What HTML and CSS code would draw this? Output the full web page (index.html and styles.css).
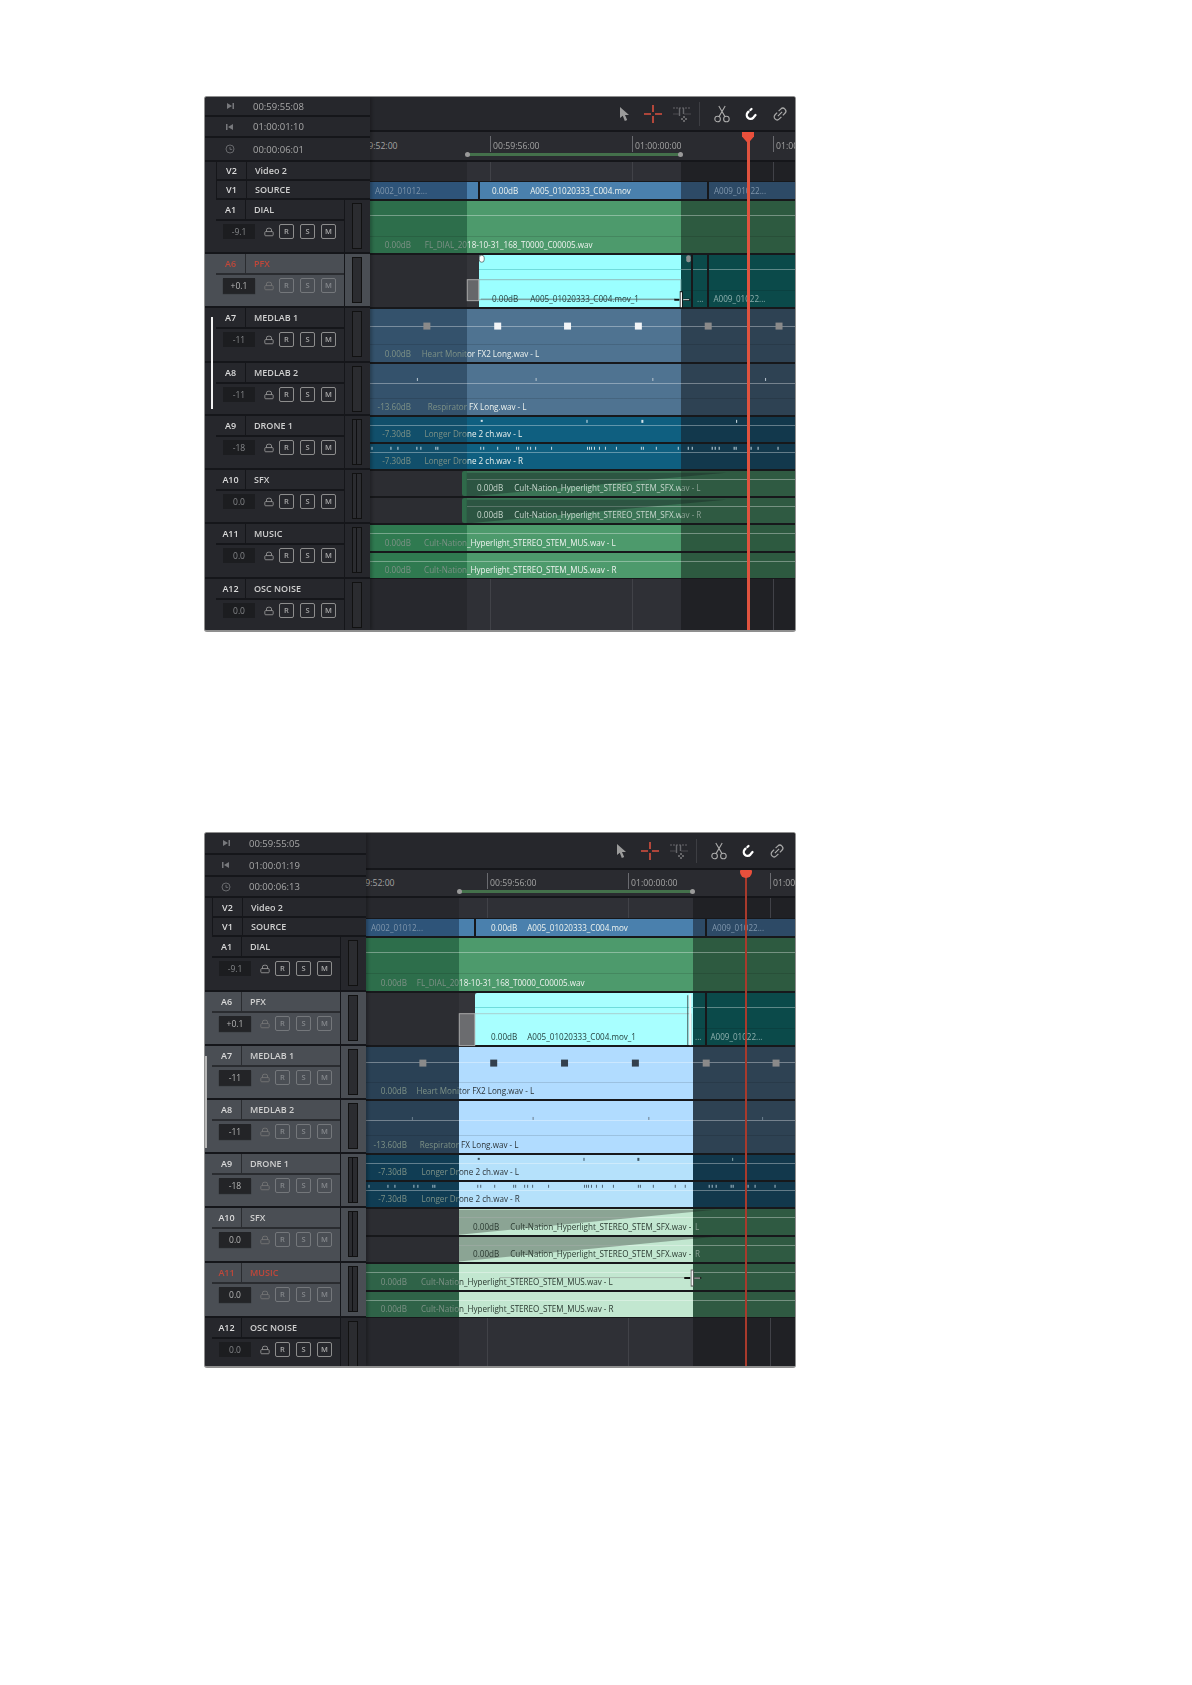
FILE: index.html
```html
<!DOCTYPE html>
<html lang="en">
<head>
    <meta charset="UTF-8">
    <title>Timeline track selection</title>
    <link rel="stylesheet" href="styles.css">
</head>
<body>
    <svg class="defs" width="0" height="0">
        <symbol id="i-out" viewBox="0 0 10 10"><path d="M2 2l5 3-5 3z M7.5 2H9v6H7.5z"/></symbol>
        <symbol id="i-in" viewBox="0 0 10 10"><path d="M8 2L3 5l5 3z M1 2h1.5v6H1z"/></symbol>
        <symbol id="i-clock" viewBox="0 0 10 10"><circle cx="5" cy="5" r="4" fill="none" stroke="currentColor" stroke-width=".8"/><path d="M5 3v2.4h2.2" fill="none" stroke="currentColor" stroke-width=".8"/></symbol>
        <symbol id="i-lock" viewBox="0 0 12 11"><rect x="1" y="5" width="10" height="5" rx="1" fill="none" stroke="currentColor"/><path d="M3 5V3a2 2 0 0 1 2-2h2a2 2 0 0 1 2 2v2" fill="none" stroke="currentColor"/></symbol>
        <symbol id="i-arrow" viewBox="0 0 18 18"><path d="M5 2l9 8h-4l2.2 5-2.4 1-2-5.2L5 13z" fill="#9b9b9b"/></symbol>
        <symbol id="i-cross" viewBox="0 0 18 18"><path d="M9 0v7M9 11v7M0 9h7M11 9h7" fill="none" stroke="#d9503f" stroke-width="1.6"/></symbol>
        <symbol id="i-trim" viewBox="0 0 18 18"><path d="M0 3h18" fill="none" stroke="#66676b" stroke-dasharray="2 1"/><path d="M6.5 3v8M10.5 3v6" fill="none" stroke="#66676b" stroke-width="1.4"/><path d="M0 9h6M11 9h7" fill="none" stroke="#4c4d51"/><path d="M11 11v2M11 15v2M8 14h2M12 14h2" fill="none" stroke="#a5a5a5"/></symbol>
        <symbol id="i-scissors" viewBox="0 0 18 18"><g fill="none" stroke="#a9a9a9" stroke-width="1.1"><circle cx="4.6" cy="14" r="2.8"/><circle cx="13.4" cy="14" r="2.8"/><path d="M6 11.6L12.2 1M12 11.6L5.8 1"/></g></symbol>
        <symbol id="i-magnet" viewBox="0 0 18 18"><path d="M9.5 4L5.8 7.4a3.8 3.8 0 0 0 5.6 5.2L14 9.5" fill="none" stroke="#fff" stroke-width="2.3" stroke-linecap="round" stroke-dasharray="1.5 2.5 16 2.5 1.5"/></symbol>
        <symbol id="i-link" viewBox="0 0 18 18"><g transform="rotate(-45 9 9)" fill="none" stroke="#a9a9a9" stroke-width="1.2"><path d="M8 6H5a3 3 0 0 0 0 6h3M10 6h3a3 3 0 0 1 0 6h-3M6 9h6"/></g></symbol>
    </svg>

    <!-- first panel: PFX clip being trimmed -->
    <section class="panel p1">
        <div class="side">
            <div class="tc"><svg class="tc-icon"><use href="#i-out"/></svg><span>00:59:55:08</span></div>
            <div class="tc"><svg class="tc-icon"><use href="#i-in"/></svg><span>01:00:01:10</span></div>
            <div class="tc"><svg class="tc-icon"><use href="#i-clock"/></svg><span>00:00:06:01</span></div>
            <div class="vrow"><span class="t-id">V2</span><span class="t-name">Video 2</span></div>
            <div class="vrow"><span class="t-id">V1</span><span class="t-name">SOURCE</span></div>

            <div class="track"><div class="t-main"><div class="t-head"><span class="t-id">A1</span><span class="t-name">DIAL</span></div><div class="t-ctl"><span class="vol">-9.1</span><svg class="lock"><use href="#i-lock"/></svg><b class="btn">R</b><b class="btn">S</b><b class="btn">M</b></div></div><div class="meter-col"><div class="meter"></div></div></div>
            <div class="track sel armed"><div class="t-main"><div class="t-head"><span class="t-id">A6</span><span class="t-name">PFX</span></div><div class="t-ctl"><span class="vol">+0.1</span><svg class="lock"><use href="#i-lock"/></svg><b class="btn">R</b><b class="btn">S</b><b class="btn">M</b></div></div><div class="meter-col"><div class="meter"></div></div></div>
            <div class="track"><div class="t-main"><div class="t-head"><span class="t-id">A7</span><span class="t-name">MEDLAB 1</span></div><div class="t-ctl"><span class="vol">-11</span><svg class="lock"><use href="#i-lock"/></svg><b class="btn">R</b><b class="btn">S</b><b class="btn">M</b></div></div><div class="meter-col"><div class="meter"></div></div></div>
            <div class="track"><div class="t-main"><div class="t-head"><span class="t-id">A8</span><span class="t-name">MEDLAB 2</span></div><div class="t-ctl"><span class="vol">-11</span><svg class="lock"><use href="#i-lock"/></svg><b class="btn">R</b><b class="btn">S</b><b class="btn">M</b></div></div><div class="meter-col"><div class="meter"></div></div></div>
            <div class="track"><div class="t-main"><div class="t-head"><span class="t-id">A9</span><span class="t-name">DRONE 1</span></div><div class="t-ctl"><span class="vol">-18</span><svg class="lock"><use href="#i-lock"/></svg><b class="btn">R</b><b class="btn">S</b><b class="btn">M</b></div></div><div class="meter-col"><div class="meter stereo"></div></div></div>
            <div class="track"><div class="t-main"><div class="t-head"><span class="t-id">A10</span><span class="t-name">SFX</span></div><div class="t-ctl"><span class="vol">0.0</span><svg class="lock"><use href="#i-lock"/></svg><b class="btn">R</b><b class="btn">S</b><b class="btn">M</b></div></div><div class="meter-col"><div class="meter stereo"></div></div></div>
            <div class="track"><div class="t-main"><div class="t-head"><span class="t-id">A11</span><span class="t-name">MUSIC</span></div><div class="t-ctl"><span class="vol">0.0</span><svg class="lock"><use href="#i-lock"/></svg><b class="btn">R</b><b class="btn">S</b><b class="btn">M</b></div></div><div class="meter-col"><div class="meter stereo"></div></div></div>
            <div class="track last"><div class="t-main"><div class="t-head"><span class="t-id">A12</span><span class="t-name">OSC NOISE</span></div><div class="t-ctl"><span class="vol">0.0</span><svg class="lock"><use href="#i-lock"/></svg><b class="btn">R</b><b class="btn">S</b><b class="btn">M</b></div></div><div class="meter-col"><div class="meter"></div></div></div>
            <span class="scroll"></span>
        </div>

        <div class="timeline">
            <div class="toolbar">
                <svg class="tool"><use href="#i-arrow"/></svg>
                <svg class="tool"><use href="#i-cross"/></svg>
                <svg class="tool"><use href="#i-trim"/></svg>
                <span class="divider"></span>
                <svg class="tool"><use href="#i-scissors"/></svg>
                <svg class="tool"><use href="#i-magnet"/></svg>
                <svg class="tool"><use href="#i-link"/></svg>
            </div>
            <div class="ruler">
                <span class="rl t0">00:59:52:00</span>
                <span class="rl t1">00:59:56:00</span>
                <span class="rl t2">01:00:00:00</span>
                <span class="rl t3">01:00:04:00</span>
                <span class="range-bar"></span>
            </div>

            <div class="lane blank"><div class="clip"><div class="seg before"></div><div class="seg range"></div><div class="seg after"></div></div><i class="tick t1"></i><i class="tick t2"></i><i class="tick t3"></i></div>

            <div class="lane plain">
                <div class="clip">
                    <div class="seg before c-navy-lo"><span class="txt first">A002_01012...</span></div>
                    <div class="seg range c-navy-hi"><span class="v1-lbl"><span>0.00dB</span><span>A005_01020333_C004.mov</span></span></div>
                    <div class="seg after c-navy-off"><span class="txt a009">A009_01022...</span></div>
                </div>
                <i class="cut cut-a"></i><i class="cut cut-b"></i>
            </div>

            <div class="lane mono">
                <div class="clip">
                    <div class="seg before c-green-lo"><span class="db">0.00dB</span><span class="txt">FL_DIAL_20</span></div>
                    <div class="seg range c-green-hi"><span class="txt">18-10-31_168_T0000_C00005.wav</span></div>
                    <div class="seg after c-green-off"></div>
                </div>
            </div>

            <div class="lane mono">
                <div class="clip">
                    <div class="seg before c-none"></div>
                    <div class="seg range c-none"><div class="cyan-clip"><span class="v1-lbl"><span>0.00dB</span><span>A005_01020333_C004.mov_1</span></span></div></div>
                    <div class="seg after c-teal"><span class="txt dots">...</span><span class="txt a009 near">A009_01022...</span></div>
                </div>
                <i class="cut cut-c"></i><i class="cut cut-b"></i>
            </div>

            <div class="lane mono l17">
                <div class="clip">
                    <div class="seg before c-steel-lo"><span class="db">0.00dB</span><span class="txt">Heart Monit</span></div>
                    <div class="seg range c-steel-hi"><span class="txt">or FX2 Long.wav - L</span></div>
                    <div class="seg after c-steel-off"></div>
                </div>
            </div>

            <div class="lane mono l19">
                <div class="clip">
                    <div class="seg before c-steel-lo"><span class="db">-13.60dB</span><span class="txt">Respirator</span></div>
                    <div class="seg range c-steel-hi"><span class="txt">&nbsp;FX Long.wav - L</span></div>
                    <div class="seg after c-steel-off"></div>
                </div>
            </div>

            <div class="lane half">
                <div class="clip">
                    <div class="seg before c-ocean-lo"><span class="db">-7.30dB</span><span class="txt">Longer Dro</span></div>
                    <div class="seg range c-ocean-hi"><span class="txt">ne 2 ch.wav - L</span></div>
                    <div class="seg after c-ocean-off"></div>
                </div>
                <div class="clip">
                    <div class="seg before c-ocean-lo"><span class="db">-7.30dB</span><span class="txt">Longer Dro</span></div>
                    <div class="seg range c-ocean-hi"><span class="txt">ne 2 ch.wav - R</span></div>
                    <div class="seg after c-ocean-off"></div>
                </div>
            </div>

            <div class="lane half">
                <div class="clip">
                    <div class="seg before c-none"><span class="stub"></span></div>
                    <div class="seg range c-fade-hi"><span class="sfx-lbl"><span>0.00dB</span><span>Cult-Nation_Hyperlight_STEREO_STEM_SFX.w</span></span></div>
                    <div class="seg after c-fade-off"><span class="txt dim">av - L</span></div>
                </div>
                <div class="clip">
                    <div class="seg before c-none"><span class="stub"></span></div>
                    <div class="seg range c-fade-hi"><span class="sfx-lbl"><span>0.00dB</span><span>Cult-Nation_Hyperlight_STEREO_STEM_SFX.w</span></span></div>
                    <div class="seg after c-fade-off"><span class="txt dim">av - R</span></div>
                </div>
            </div>

            <div class="lane half">
                <div class="clip">
                    <div class="seg before c-green-mid"><span class="db">0.00dB</span><span class="txt">Cult-Nation</span></div>
                    <div class="seg range c-green-hi"><span class="txt">_Hyperlight_STEREO_STEM_MUS.wav - L</span></div>
                    <div class="seg after c-green-off"></div>
                </div>
                <div class="clip">
                    <div class="seg before c-green-mid"><span class="db">0.00dB</span><span class="txt">Cult-Nation</span></div>
                    <div class="seg range c-green-hi"><span class="txt">_Hyperlight_STEREO_STEM_MUS.wav - R</span></div>
                    <div class="seg after c-green-off"></div>
                </div>
            </div>

            <div class="lane blank"><div class="clip"><div class="seg before"></div><div class="seg range"></div><div class="seg after"></div></div><i class="tick t1"></i><i class="tick t2"></i><i class="tick t3"></i></div>

            <svg class="overlay" viewBox="370 97 426 533">
                <path d="M467 497L727 473H467zM467 524L727 500H467z" fill="#12181a" fill-opacity=".33"/>
                <g fill="#8a8a8a"><rect x="423.5" y="322.5" width="7" height="7"/><rect x="705.5" y="322.5" width="7" height="7"/><rect x="776.5" y="322.5" width="7" height="7"/></g>
                <g fill="#f2f5f7"><rect x="494.5" y="322.5" width="7" height="7"/><rect x="564.5" y="322.5" width="7" height="7"/><rect x="635.5" y="322.5" width="7" height="7"/></g>
                <g fill="#b9c6d0"><rect x="417" y="378" width="1" height="3"/><rect x="536" y="378" width="1" height="3"/><rect x="653" y="378" width="1" height="3"/><rect x="766" y="378" width="1" height="3"/></g>
                <g fill="#d6e4ea"><rect x="481" y="420" width="2" height="2"/><rect x="587" y="420" width="1" height="3"/><rect x="642" y="420" width="2" height="3"/><rect x="737" y="420" width="1" height="3"/></g>
                <path d="M372 447v3M391 447v3M398 447v3M417 447v3M421 447v3M436 447v3M438 447v3M481 447v3M484 447v3M498 447v3M517 447v3M519 447v3M528 447v3M531 447v3M536 447v3M552 447v3M588 447v3M590 447v3M592 447v3M595 447v3M600 447v3M606 447v3M617 447v3M642 447v3M644 447v3M657 447v3M679 447v3M689 447v3M693 447v3M713 447v3M716 447v3M720 447v3M735 447v3M737 447v3M752 447v3M759 447v3M779 447v3" stroke="#c9dbe3" stroke-width="1"/>
                <rect x="479" y="279.5" width="202.5" height="20" fill="none" stroke="#8fbcbc"/>
                <rect x="467.5" y="279.5" width="11.5" height="21" fill="#66676a" stroke="#a9a9a9"/>
                <path d="M481 299H676" stroke="#6f8f8f"/>
                <rect x="479.5" y="255" width="5" height="7" rx="2.5" fill="#fff" stroke="#333" stroke-width=".6"/>
                <rect x="687" y="255" width="4.5" height="7" rx="2" fill="#8a8f8f"/>
                <path d="M675 299.5h5M685 299.5h6" stroke="#111" stroke-width="2"/><path d="M684 299.5h6" stroke="#ddd"/>
                <path d="M682 291v17" stroke="#111" stroke-width="3"/><path d="M682 292v15" stroke="#fff" stroke-width="1.4"/>
            </svg>
            <div class="playhead"><span class="head"></span></div>
        </div>
    </section>

    <!-- second panel: several tracks selected, music clip trimmed -->
    <section class="panel p2">
        <div class="side">
            <div class="tc"><svg class="tc-icon"><use href="#i-out"/></svg><span>00:59:55:05</span></div>
            <div class="tc"><svg class="tc-icon"><use href="#i-in"/></svg><span>01:00:01:19</span></div>
            <div class="tc"><svg class="tc-icon"><use href="#i-clock"/></svg><span>00:00:06:13</span></div>
            <div class="vrow"><span class="t-id">V2</span><span class="t-name">Video 2</span></div>
            <div class="vrow"><span class="t-id">V1</span><span class="t-name">SOURCE</span></div>

            <div class="track"><div class="t-main"><div class="t-head"><span class="t-id">A1</span><span class="t-name">DIAL</span></div><div class="t-ctl"><span class="vol">-9.1</span><svg class="lock"><use href="#i-lock"/></svg><b class="btn">R</b><b class="btn">S</b><b class="btn">M</b></div></div><div class="meter-col"><div class="meter"></div></div></div>
            <div class="track sel"><div class="t-main"><div class="t-head"><span class="t-id">A6</span><span class="t-name">PFX</span></div><div class="t-ctl"><span class="vol">+0.1</span><svg class="lock"><use href="#i-lock"/></svg><b class="btn">R</b><b class="btn">S</b><b class="btn">M</b></div></div><div class="meter-col"><div class="meter"></div></div></div>
            <div class="track sel"><div class="t-main"><div class="t-head"><span class="t-id">A7</span><span class="t-name">MEDLAB 1</span></div><div class="t-ctl"><span class="vol">-11</span><svg class="lock"><use href="#i-lock"/></svg><b class="btn">R</b><b class="btn">S</b><b class="btn">M</b></div></div><div class="meter-col"><div class="meter"></div></div></div>
            <div class="track sel"><div class="t-main"><div class="t-head"><span class="t-id">A8</span><span class="t-name">MEDLAB 2</span></div><div class="t-ctl"><span class="vol">-11</span><svg class="lock"><use href="#i-lock"/></svg><b class="btn">R</b><b class="btn">S</b><b class="btn">M</b></div></div><div class="meter-col"><div class="meter"></div></div></div>
            <div class="track sel"><div class="t-main"><div class="t-head"><span class="t-id">A9</span><span class="t-name">DRONE 1</span></div><div class="t-ctl"><span class="vol">-18</span><svg class="lock"><use href="#i-lock"/></svg><b class="btn">R</b><b class="btn">S</b><b class="btn">M</b></div></div><div class="meter-col"><div class="meter stereo"></div></div></div>
            <div class="track sel"><div class="t-main"><div class="t-head"><span class="t-id">A10</span><span class="t-name">SFX</span></div><div class="t-ctl"><span class="vol">0.0</span><svg class="lock"><use href="#i-lock"/></svg><b class="btn">R</b><b class="btn">S</b><b class="btn">M</b></div></div><div class="meter-col"><div class="meter stereo"></div></div></div>
            <div class="track sel armed"><div class="t-main"><div class="t-head"><span class="t-id">A11</span><span class="t-name">MUSIC</span></div><div class="t-ctl"><span class="vol">0.0</span><svg class="lock"><use href="#i-lock"/></svg><b class="btn">R</b><b class="btn">S</b><b class="btn">M</b></div></div><div class="meter-col"><div class="meter stereo"></div></div></div>
            <div class="track last"><div class="t-main"><div class="t-head"><span class="t-id">A12</span><span class="t-name">OSC NOISE</span></div><div class="t-ctl"><span class="vol">0.0</span><svg class="lock"><use href="#i-lock"/></svg><b class="btn">R</b><b class="btn">S</b><b class="btn">M</b></div></div><div class="meter-col"><div class="meter"></div></div></div>
            <span class="scroll"></span>
        </div>

        <div class="timeline">
            <div class="toolbar">
                <svg class="tool"><use href="#i-arrow"/></svg>
                <svg class="tool"><use href="#i-cross"/></svg>
                <svg class="tool"><use href="#i-trim"/></svg>
                <span class="divider"></span>
                <svg class="tool"><use href="#i-scissors"/></svg>
                <svg class="tool"><use href="#i-magnet"/></svg>
                <svg class="tool"><use href="#i-link"/></svg>
            </div>
            <div class="ruler">
                <span class="rl t0">00:59:52:00</span>
                <span class="rl t1">00:59:56:00</span>
                <span class="rl t2">01:00:00:00</span>
                <span class="rl t3">01:00:04:00</span>
                <span class="range-bar"></span>
            </div>

            <div class="lane blank"><div class="clip"><div class="seg before"></div><div class="seg range"></div><div class="seg after"></div></div><i class="tick t1"></i><i class="tick t2"></i><i class="tick t3"></i></div>

            <div class="lane plain">
                <div class="clip">
                    <div class="seg before c-navy-lo"><span class="txt first">A002_01012...</span></div>
                    <div class="seg range c-navy-hi"><span class="v1-lbl"><span>0.00dB</span><span>A005_01020333_C004.mov</span></span></div>
                    <div class="seg after c-navy-off"><span class="txt a009">A009_01022...</span></div>
                </div>
                <i class="cut cut-a"></i><i class="cut cut-b"></i>
            </div>

            <div class="lane mono">
                <div class="clip">
                    <div class="seg before c-green-lo"><span class="db">0.00dB</span><span class="txt">FL_DIAL_20</span></div>
                    <div class="seg range c-green-hi"><span class="txt">18-10-31_168_T0000_C00005.wav</span></div>
                    <div class="seg after c-green-off"></div>
                </div>
            </div>

            <div class="lane mono">
                <div class="clip">
                    <div class="seg before c-none"></div>
                    <div class="seg range c-none"><div class="cyan-clip"><span class="v1-lbl"><span>0.00dB</span><span>A005_01020333_C004.mov_1</span></span></div></div>
                    <div class="seg after c-teal"><span class="txt dots">...</span><span class="txt a009 near">A009_01022...</span></div>
                </div>
                <i class="cut cut-b"></i>
            </div>

            <div class="lane mono l15">
                <div class="clip">
                    <div class="seg before c-steel-dark"><span class="db">0.00dB</span><span class="txt">Heart Moni</span></div>
                    <div class="seg range c-sky"><span class="txt">tor FX2 Long.wav - L</span></div>
                    <div class="seg after c-steel-off"></div>
                </div>
            </div>

            <div class="lane mono l19">
                <div class="clip">
                    <div class="seg before c-steel-dark"><span class="db">-13.60dB</span><span class="txt">Respirator</span></div>
                    <div class="seg range c-sky"><span class="txt">&nbsp;FX Long.wav - L</span></div>
                    <div class="seg after c-steel-off"></div>
                </div>
            </div>

            <div class="lane half">
                <div class="clip">
                    <div class="seg before c-ocean-dark"><span class="db">-7.30dB</span><span class="txt">Longer Dr</span></div>
                    <div class="seg range c-ice"><span class="txt">one 2 ch.wav - L</span></div>
                    <div class="seg after c-ocean-off"></div>
                </div>
                <div class="clip">
                    <div class="seg before c-ocean-dark"><span class="db">-7.30dB</span><span class="txt">Longer Dr</span></div>
                    <div class="seg range c-ice"><span class="txt">one 2 ch.wav - R</span></div>
                    <div class="seg after c-ocean-off"></div>
                </div>
            </div>

            <div class="lane half">
                <div class="clip">
                    <div class="seg before c-none"></div>
                    <div class="seg range c-mint"><span class="sfx-lbl"><span>0.00dB</span><span>Cult-Nation_Hyperlight_STEREO_STEM_SFX.wav -</span></span></div>
                    <div class="seg after c-fade-off"><span class="txt dim">&nbsp;L</span></div>
                </div>
                <div class="clip">
                    <div class="seg before c-none"></div>
                    <div class="seg range c-mint"><span class="sfx-lbl"><span>0.00dB</span><span>Cult-Nation_Hyperlight_STEREO_STEM_SFX.wav -</span></span></div>
                    <div class="seg after c-fade-off"><span class="txt dim">&nbsp;R</span></div>
                </div>
            </div>

            <div class="lane half">
                <div class="clip">
                    <div class="seg before c-green-dark"><span class="db">0.00dB</span><span class="txt">Cult-Natio</span></div>
                    <div class="seg range c-mint"><span class="txt">n_Hyperlight_STEREO_STEM_MUS.wav - L</span></div>
                    <div class="seg after c-fade-off"></div>
                </div>
                <div class="clip">
                    <div class="seg before c-green-dark"><span class="db">0.00dB</span><span class="txt">Cult-Natio</span></div>
                    <div class="seg range c-mint"><span class="txt">n_Hyperlight_STEREO_STEM_MUS.wav - R</span></div>
                    <div class="seg after c-fade-off"></div>
                </div>
            </div>

            <div class="lane blank"><div class="clip"><div class="seg before"></div><div class="seg range"></div><div class="seg after"></div></div><i class="tick t1"></i><i class="tick t2"></i><i class="tick t3"></i></div>

            <svg class="overlay" viewBox="366 833 430 533">
                <path d="M459 1235L716 1210H459zM459 1262L716 1237H459z" fill="#1c1c1c" fill-opacity=".33"/>
                <g fill="#8a8a8a"><rect x="419.5" y="1059.5" width="7" height="7"/><rect x="703.5" y="1059.5" width="7" height="7"/><rect x="773.5" y="1059.5" width="7" height="7"/></g>
                <g fill="#33404d"><rect x="490.5" y="1059.5" width="7" height="7"/><rect x="561.5" y="1059.5" width="7" height="7"/><rect x="632.5" y="1059.5" width="7" height="7"/></g>
                <g fill="#6c7f8e"><rect x="412" y="1117" width="1" height="3"/><rect x="533" y="1117" width="1" height="3"/><rect x="649" y="1117" width="1" height="3"/><rect x="763" y="1117" width="1" height="3"/></g>
                <g fill="#39505e"><rect x="478" y="1158" width="2" height="2"/><rect x="584" y="1158" width="1" height="3"/><rect x="638" y="1158" width="2" height="3"/></g>
                <rect x="733" y="1158" width="1" height="3" fill="#8aa"/>
                <path d="M478 1185v3M481 1185v3M495 1185v3M514 1185v3M516 1185v3M525 1185v3M528 1185v3M533 1185v3M549 1185v3M585 1185v3M587 1185v3M589 1185v3M592 1185v3M597 1185v3M603 1185v3M614 1185v3M639 1185v3M641 1185v3M654 1185v3M676 1185v3M686 1185v3" stroke="#4d6272" stroke-width="1"/>
                <path d="M369 1185v3M388 1185v3M395 1185v3M414 1185v3M418 1185v3M433 1185v3M435 1185v3M710 1185v3M713 1185v3M717 1185v3M732 1185v3M734 1185v3M749 1185v3M756 1185v3M776 1185v3" stroke="#a9c0cc" stroke-width="1"/>
                <rect x="459.5" y="1013.5" width="15.5" height="32" fill="#6b6c6f" stroke="#a9a9a9"/>
                <path d="M475 1013.5H692V1045" fill="none" stroke="#a9cfcf"/>
                <path d="M691 994v51" stroke="#f2f5f5" stroke-width="2"/>
                <path d="M688.5 995v50" stroke="#333" stroke-width=".8"/>
                <path d="M500 1278H686" stroke="#a8baae"/>
                <path d="M685 1278.5h6M695 1278.5h7" stroke="#111" stroke-width="2"/><path d="M695 1278.5h6" stroke="#ddd"/>
                <path d="M693 1270v17" stroke="#555" stroke-width="3"/><path d="M693 1271v15" stroke="#fff" stroke-width="1.4"/>
            </svg>
            <div class="playhead"><span class="head"></span></div>
        </div>
    </section>

    <footer class="page-foot"><span class="rule"></span><span class="folio"></span></footer>
</body>
</html>
```

FILE: styles.css
```css
body {
    margin: 0;
    height: 1685px;
    overflow: hidden;
    background: #fff;
    font-family: 'Open Sans', 'Liberation Sans', sans-serif;
}
.defs {
    position: absolute;
}

/* panel frame */
.panel {
    display: flex;
    width: 590px;
    margin-left: 204px;
    border: 1px solid #8f8f8f;
    border-bottom-width: 2px;
    border-radius: 3px;
    overflow: hidden;
    background: #1f2024;
    filter: blur(0.3px);
}
.p1 {
    margin-top: 96px;
    height: 533px;
    --side-w: 166px;
    --strip: 12px;
    --tc-x: 21px;
    --tc-gap: 18px;
    --before: 97px;
    --range: 214px;
    --after: 115px;
    --t1: 120px;
    --t2: 262px;
    --t3: 403px;
    --cut-a: 108px;
    --cut-b: 337px;
    --cut-c: 321px;
    --ph: 377px;
    --ph-w: 2.5px;
    --ph-col: #e0533f;
    --cyan-x: 12px;
    --lbl-x: 25px;
    --lbl-gap: 12px;
    --sfx-x: 10px;
    --tool-r: 6px;
    --a009-x: 33px;
    --dots-x: 16px;
    --near-x: 10px;
    --bar-y: 4px;
    --rl-y: 4px;
    --tracks: 19px 19px 54px 54px 55px 53px 54px 54px 55px 1fr;
    --top-side: 20px 21px 24px;
    --top-time: 35px 30px;
}
.p2 {
    margin-top: 200px;
    height: 533px;
    --side-w: 162px;
    --strip: 8px;
    --tc-x: 17px;
    --tc-gap: 18px;
    --before: 93px;
    --range: 234px;
    --after: 103px;
    --t1: 121px;
    --t2: 262px;
    --t3: 404px;
    --cut-a: 108px;
    --cut-b: 339px;
    --cut-c: 327px;
    --ph: 379px;
    --ph-w: 1.5px;
    --ph-col: #a83a2c;
    --cyan-x: 16px;
    --lbl-x: 32px;
    --lbl-gap: 10px;
    --sfx-x: 14px;
    --tool-r: 9px;
    --a009-x: 19px;
    --dots-x: 2px;
    --near-x: 9px;
    --bar-y: 3px;
    --rl-y: 3px;
    --tracks: 20px 19px 55px 54px 54px 54px 54px 55px 55px 1fr;
    --top-side: 22px 22px 21px;
    --top-time: 37px 28px;
}

/* left column */
.side {
    position: relative;
    display: grid;
    grid-template-rows: var(--top-side) var(--tracks);
    flex: none;
    width: var(--side-w);
    margin-left: -1px;
    background: #26272c;
    color: #d8d8d8;
    box-shadow: 2px 0 3px rgba(0, 0, 0, 0.25);
    z-index: 2;
}
.tc {
    display: flex;
    align-items: center;
    gap: var(--tc-gap);
    padding-left: var(--tc-x);
    border-bottom: 2px solid #15161a;
    font-size: 9.5px;
    color: #a8a8a8;
}
.tc-icon {
    width: 10px;
    height: 10px;
    fill: #77787c;
    color: #77787c;
}
.vrow {
    display: flex;
    align-items: center;
    margin-left: var(--strip);
    border-left: 1px solid #15161a;
    border-bottom: 2px solid #15161a;
    font-size: 9px;
}
.t-id {
    flex: none;
    width: 29px;
    height: 100%;
    display: flex;
    align-items: center;
    justify-content: center;
    border-right: 1px solid #15161a;
    font-weight: 600;
    color: #dcdcdc;
}
.t-name {
    padding-left: 8px;
    font-weight: 600;
    color: #cfcfcf;
}
.track {
    display: flex;
    padding-left: var(--strip);
    border-bottom: 2px solid #15161a;
    overflow: hidden;
}
.track.last {
    border-bottom: 0;
}
.track.sel {
    background: #4a4e54;
}
.t-main {
    flex: 1;
    border-right: 1px solid #15161a;
}
.t-head {
    display: flex;
    align-items: center;
    height: 19px;
    border-bottom: 2px solid #15161a;
    font-size: 9px;
}
.sel .t-head {
    border-bottom-color: #2a2c30;
}
.sel .t-id {
    border-right-color: #2a2c30;
}
.armed .t-id,
.armed .t-name {
    color: #c0473a;
}
.t-ctl {
    display: flex;
    align-items: center;
    padding: 3px 0 0 7px;
}
.vol {
    flex: none;
    width: 32px;
    height: 15px;
    margin-right: 9px;
    background: #1c1d20;
    font-size: 8.5px;
    line-height: 15px;
    text-align: center;
    color: #85878a;
}
.sel .vol {
    background: #232427;
    color: #b5b5b5;
    box-shadow: 0 1px 1px rgba(0, 0, 0, 0.5);
}
.lock {
    flex: none;
    width: 10px;
    height: 10px;
    margin-right: 5px;
    color: #9d9d9d;
}
.sel .lock {
    color: #777;
}
.btn {
    flex: none;
    width: 13px;
    height: 13px;
    margin-right: 6px;
    border: 1px solid #8d8d8d;
    border-radius: 2px;
    font-size: 7.5px;
    font-weight: 600;
    line-height: 13px;
    text-align: center;
    color: #a9a9a9;
}
.sel .btn {
    border-color: #74777b;
    color: #85888c;
}
.meter-col {
    flex: none;
    width: 25px;
    padding: 3px 0 3px 7px;
    box-sizing: border-box;
}
.meter {
    width: 10px;
    height: 46px;
    border: 1px solid #111;
    box-sizing: border-box;
    background: #2b2c30;
}
.meter.stereo {
    background: linear-gradient(90deg, #2b2c30 3px, #0f0f11 3px, #0f0f11 4px, #2b2c30 4px);
}
.scroll {
    position: absolute;
    top: 220px;
    left: 7px;
    width: 2px;
    height: 92px;
    background: #f2f2f2;
}
.p2 .scroll {
    top: 223px;
    left: 1px;
    background: #b7b7b7;
}

/* timeline */
.timeline {
    position: relative;
    flex: 1;
    display: grid;
    grid-template-rows: var(--top-time) var(--tracks);
    min-width: 0;
    background: #17181b;
}
.toolbar {
    display: flex;
    align-items: center;
    justify-content: flex-end;
    gap: 11px;
    padding-right: var(--tool-r);
    background: #26272c;
    border-bottom: 2px solid #15161a;
}
.tool {
    width: 18px;
    height: 18px;
}
.divider {
    width: 1px;
    height: 24px;
    margin: 0 2px 0 -3px;
    background: #3d3e43;
}
.ruler {
    position: relative;
    overflow: hidden;
    background: #2a2b30;
    border-bottom: 2px solid #15161a;
    font-size: 8.7px;
    color: #a3a3a3;
}
.rl {
    position: absolute;
    top: var(--rl-y);
    padding: 4px 0 0 2px;
    line-height: 12px;
    border-left: 1px solid #6a6b70;
}
.rl.t0 {
    left: calc(var(--t1) - 142px);
}
.rl.t1 {
    left: var(--t1);
}
.rl.t2 {
    left: var(--t2);
}
.rl.t3 {
    left: var(--t3);
}
.range-bar {
    position: absolute;
    bottom: var(--bar-y);
    left: var(--before);
    width: var(--range);
    height: 3px;
    background: #44704b;
}
.range-bar::before,
.range-bar::after {
    content: "";
    position: absolute;
    top: -1px;
    width: 5px;
    height: 5px;
    border-radius: 50%;
    background: #9a9a9a;
}
.range-bar::before {
    left: -2px;
}
.range-bar::after {
    right: -2px;
}

/* tracks */
.lane {
    position: relative;
    display: flex;
    flex-direction: column;
    gap: 2px;
    padding: 1px 0;
    min-height: 0;
    overflow: hidden;
}
.lane.blank {
    padding: 0;
}
.clip {
    flex: 1;
    display: flex;
    min-height: 0;
}
.seg {
    display: flex;
    align-items: flex-end;
    flex: none;
    overflow: hidden;
    white-space: nowrap;
    font-size: 8.1px;
    line-height: 11px;
    color: #eef3ef;
    background-repeat: no-repeat;
    background-size: 100% 1px;
}
.before {
    width: var(--before);
    color: #7d9186;
}
.range {
    width: var(--range);
}
.after {
    width: var(--after);
}
.blank .before {
    background-color: #27282d;
}
.blank .range {
    background-color: #2f3036;
}
.blank .after {
    background-color: #202125;
}
.mono .seg {
    background-image: linear-gradient(rgba(255, 255, 255, 0.34), rgba(255, 255, 255, 0.34)), linear-gradient(rgba(0, 0, 0, 0.12), rgba(0, 0, 0, 0.12));
    background-position: 0 14px, 0 35px;
}
.mono.l15 .seg {
    background-position: 0 15px, 0 35px;
}
.mono.l17 .seg {
    background-position: 0 17px, 0 35px;
}
.mono.l19 .seg {
    background-position: 0 19px, 0 34px;
}
.half .seg {
    background-image: linear-gradient(rgba(255, 255, 255, 0.34), rgba(255, 255, 255, 0.34));
    background-position: 0 8px;
}
.mono .c-none,
.half .c-none {
    background-image: none;
}
.plain .seg {
    align-items: center;
}
.db,
.txt,
.v1-lbl,
.sfx-lbl {
    position: relative;
    z-index: 2;
    padding-bottom: 3px;
}
.plain .txt,
.plain .v1-lbl {
    padding-bottom: 0;
}
.db {
    flex: none;
    width: 41px;
    text-align: right;
}
.before .txt {
    margin-left: auto;
}
.before .first {
    margin-left: 5px;
    color: #7f95ab;
}
.v1-lbl,
.sfx-lbl {
    display: flex;
}
.v1-lbl {
    gap: var(--lbl-gap);
    padding-left: var(--lbl-x);
}
.sfx-lbl {
    gap: 11px;
    padding-left: var(--sfx-x);
}
.dim {
    color: #8aa093;
}
.a009 {
    margin-left: var(--a009-x);
    color: #7f95ab;
}
.a009.near {
    margin-left: var(--near-x);
    color: #8fb0ae;
}
.dots {
    margin-left: var(--dots-x);
    color: #8fb0ae;
}
.cyan-clip {
    flex: 1;
    align-self: stretch;
    display: flex;
    align-items: flex-end;
    margin-left: var(--cyan-x);
    border-radius: 2px 0 0 0;
    background: #9bffff linear-gradient(#6fdcdc, #6fdcdc) 0 14px / 100% 1px no-repeat;
    color: #26413f;
}
.p2 .cyan-clip {
    background-color: #a8ffff;
}
.cyan-clip .v1-lbl {
    padding-left: calc(var(--lbl-x) - var(--cyan-x));
    padding-bottom: 3px;
}
.stub {
    width: 5px;
    height: 100%;
    margin-left: auto;
    border-radius: 2px 0 0 2px;
    background: #2f6a4a;
}
.tick {
    position: absolute;
    top: 0;
    bottom: 0;
    width: 1px;
    background: #414248;
}
.tick.t1 {
    left: var(--t1);
}
.tick.t2 {
    left: var(--t2);
}
.tick.t3 {
    left: var(--t3);
}
.cut {
    position: absolute;
    top: 0;
    bottom: 0;
    width: 2px;
    background: #17181b;
}
.cut-a {
    left: var(--cut-a);
}
.cut-b {
    left: var(--cut-b);
}
.cut-c {
    left: var(--cut-c);
}

/* clip colours */
.c-none {
    background-color: #2c2d32;
}
.range.c-none {
    background-color: #34353a;
}
.c-navy-hi {
    background-color: #4a80ad;
}
.c-navy-lo {
    background-color: #2e5479;
}
.c-navy-off {
    background-color: #2d4a66;
}
.c-green-hi {
    background-color: #4d9a6c;
}
.c-green-mid {
    background-color: #2f7a50;
}
.c-green-lo {
    background-color: #2d6e4b;
}
.c-green-dark {
    background-color: #2f6348;
}
.c-green-off {
    background-color: #2d5a40;
}
.c-teal {
    background-color: #0b4a4a;
}
.c-steel-hi {
    background-color: #4f7391;
}
.c-steel-lo {
    background-color: #34526c;
}
.c-steel-dark {
    background-color: #2a4155;
}
.c-steel-off {
    background-color: #2e4253;
}
.c-sky {
    background-color: #b1dcff;
    color: #2b3338;
}
.c-ocean-hi {
    background-color: #0f5f80;
}
.c-ocean-lo {
    background-color: #114f6b;
}
.c-ocean-dark {
    background-color: #103d54;
}
.c-ocean-off {
    background-color: #12384c;
}
.c-ice {
    background-color: #b5e1fb;
    color: #2b3338;
}
.c-fade-hi {
    background-color: #3a7455;
    color: #c7d6cd;
}
.c-fade-off {
    background-color: #2f5a42;
}
.c-mint {
    background-color: #c2e7d0;
    color: #2b3a31;
}

/* things drawn over the tracks */
.overlay {
    position: absolute;
    top: 0;
    left: 0;
    width: 100%;
    height: 100%;
    z-index: 1;
    pointer-events: none;
}
.playhead {
    position: absolute;
    top: 35px;
    bottom: 0;
    left: var(--ph);
    width: var(--ph-w);
    background: var(--ph-col);
    z-index: 3;
}
.p2 .playhead {
    top: 37px;
}
.head {
    position: absolute;
    top: 0;
    left: -5px;
    width: 12px;
    height: 10px;
    background: #e9503c;
    clip-path: polygon(0 0, 100% 0, 100% 45%, 60% 100%, 40% 100%, 0 45%);
}
.p2 .head {
    height: 8px;
    border-radius: 1px 1px 6px 6px;
    clip-path: none;
}

/* page bottom */
.page-foot {
    display: flex;
    align-items: flex-start;
    margin-top: 317px;
}
.rule {
    width: 1077px;
    height: 1px;
    background: #000;
}
.folio {
    width: 12px;
    height: 1px;
    margin-left: 64px;
    background: linear-gradient(90deg, #a77 5px, transparent 5px, transparent 9px, #77a 9px);
}
```
